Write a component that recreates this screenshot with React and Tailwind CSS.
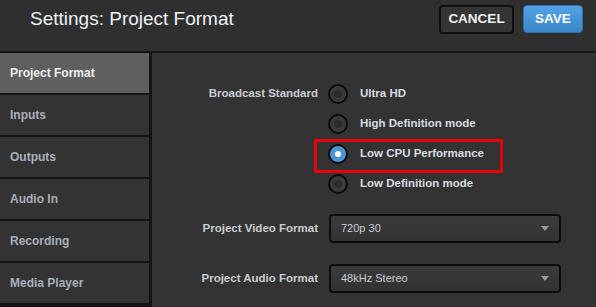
import { useState } from 'react';

const NAV = ['Project Format', 'Inputs', 'Outputs', 'Audio In', 'Recording', 'Media Player'];
const STANDARDS = ['Ultra HD', 'High Definition mode', 'Low CPU Performance', 'Low Definition mode'];

function Radio({ checked }) {
  return (
    <span className={'flex h-[20px] w-[20px] shrink-0 items-center justify-center rounded-full border-2 border-[#0b0b0b] ' + (checked ? 'bg-[#4d94d4]' : 'bg-[#3a3a3a]')}>
      <span className={checked ? 'h-[6px] w-[6px] rounded-full bg-white' : 'h-[8px] w-[8px] rounded-full bg-[#2b2b2b]'} />
    </span>
  );
}

function Select({ value }) {
  return (
    <div className="flex h-[29px] w-[232px] items-center justify-between rounded-[4px] border-2 border-[#0c0c0c] bg-gradient-to-b from-[#3b3b3b] to-[#323232] pl-[10px] pr-[10px]">
      <span className="text-[11px] text-[#c8ced6]">{value}</span>
      <svg width="8" height="5" viewBox="0 0 8 5"><path d="M0 0h8L4 5z" fill="#9a9a9a" /></svg>
    </div>
  );
}

export default function App() {
  const [active] = useState(0);
  const [standard] = useState(2);

  return (
    <div className="h-[307px] w-[596px] overflow-hidden bg-[#333333] font-['Liberation_Sans',Arial,sans-serif]">
      <div className="flex h-[53px] items-center justify-between border-b-[2px] border-[#141414] bg-[#2f2f2f] pb-[12px] pl-[30px] pr-[13px]">
        <h1 className="text-[19px] text-[#eef2f6]">Settings: Project Format</h1>
        <div className="flex gap-[9px]">
          <button className="h-[29px] w-[75px] rounded-[4px] border-2 border-[#0e0e0e] bg-[#343434] text-[13.5px] font-bold text-[#eef0f2]">CANCEL</button>
          <button className="h-[28px] w-[60px] rounded-[4px] border border-[#2f6fa8] bg-gradient-to-b from-[#52a3e6] to-[#3a86c9] text-[13.5px] font-bold text-white">SAVE</button>
        </div>
      </div>

      <div className="flex h-[254px]">
        <div className="flex w-[152px] flex-col gap-[2px] bg-[#141414] pr-[3px]">
          {NAV.map((n, i) => (
            <div key={n} className={'flex h-[40px] shrink-0 items-center pl-[10px] text-[12px] font-bold ' + (i === active ? 'bg-[#5f5f5f] text-[#eef0f2]' : 'bg-[#333333] text-[#a8b0b9]')}>
              {n}
            </div>
          ))}
        </div>

        <div className="flex-1 pt-[26px]">
          <div className="flex">
            <div className="w-[176px] pt-[6px] pr-[10px] text-right text-[11.5px] font-bold text-[#c9cdd2]">Broadcast Standard</div>
            <div className="flex flex-col">
              {STANDARDS.map((s, i) => (
                <div key={s} className="relative flex h-[30px] items-center gap-[12px]">
                  <Radio checked={i === standard} />
                  <span className="text-[11.5px] font-bold text-[#d8dde2]">{s}</span>
                  {i === standard && <span className="absolute left-[-14px] top-[0px] h-[34px] w-[189px] border-[3px] border-[#e8000b]" />}
                </div>
              ))}
            </div>
          </div>

          <div className="mt-[15px] flex items-center">
            <div className="w-[177px] pr-[11px] text-right text-[11.5px] font-bold text-[#c9cdd2]">Project Video Format</div>
            <Select value="720p 30" />
          </div>
          <div className="mt-[21px] flex items-center">
            <div className="w-[177px] pr-[11px] text-right text-[11.5px] font-bold text-[#c9cdd2]">Project Audio Format</div>
            <Select value="48kHz Stereo" />
          </div>
        </div>
      </div>
    </div>
  );
}
